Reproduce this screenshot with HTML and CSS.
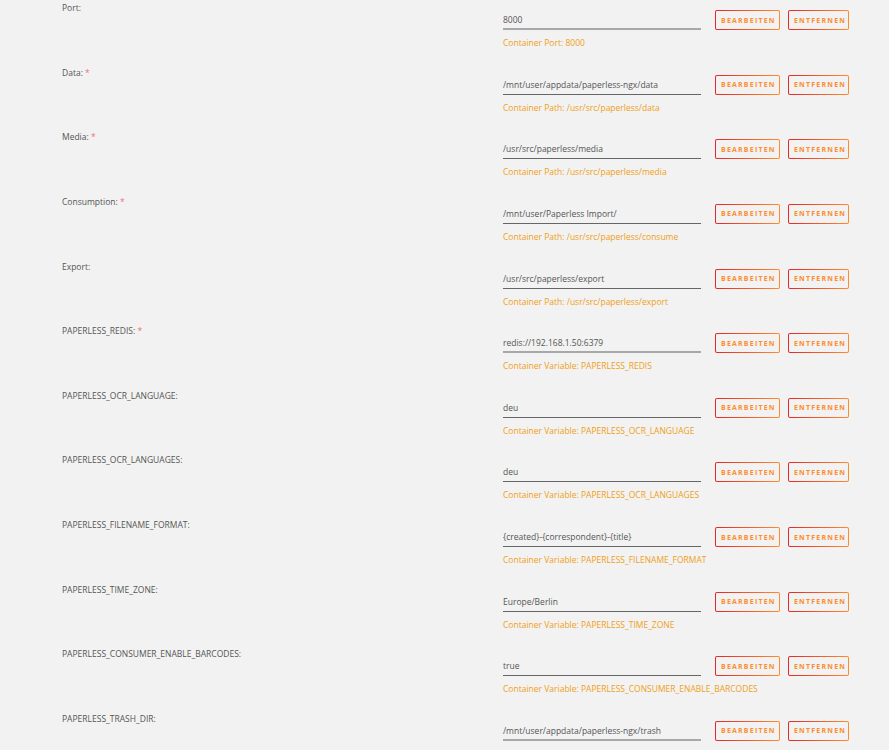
FILE: index.html
```html
<!DOCTYPE html>
<html lang="de">
<head>
<meta charset="utf-8">
<title>Paperless-ngx Konfiguration</title>
<link rel="stylesheet" href="styles.css">
</head>
<body>
<div class="config">
  <div class="row">
    <div class="label">Port:</div>
    <div class="field">
      <div class="input light">8000</div>
      <div class="help">Container Port: 8000</div>
    </div>
    <div class="actions"><button class="btn">Bearbeiten</button><button class="btn">Entfernen</button></div>
  </div>
  <div class="row">
    <div class="label">Data: <span class="req">*</span></div>
    <div class="field">
      <div class="input">/mnt/user/appdata/paperless-ngx/data</div>
      <div class="help">Container Path: /usr/src/paperless/data</div>
    </div>
    <div class="actions"><button class="btn">Bearbeiten</button><button class="btn">Entfernen</button></div>
  </div>
  <div class="row">
    <div class="label">Media: <span class="req">*</span></div>
    <div class="field">
      <div class="input">/usr/src/paperless/media</div>
      <div class="help">Container Path: /usr/src/paperless/media</div>
    </div>
    <div class="actions"><button class="btn">Bearbeiten</button><button class="btn">Entfernen</button></div>
  </div>
  <div class="row">
    <div class="label">Consumption: <span class="req">*</span></div>
    <div class="field">
      <div class="input">/mnt/user/Paperless Import/</div>
      <div class="help">Container Path: /usr/src/paperless/consume</div>
    </div>
    <div class="actions"><button class="btn">Bearbeiten</button><button class="btn">Entfernen</button></div>
  </div>
  <div class="row">
    <div class="label">Export:</div>
    <div class="field">
      <div class="input">/usr/src/paperless/export</div>
      <div class="help">Container Path: /usr/src/paperless/export</div>
    </div>
    <div class="actions"><button class="btn">Bearbeiten</button><button class="btn">Entfernen</button></div>
  </div>
  <div class="row">
    <div class="label">PAPERLESS_REDIS: <span class="req">*</span></div>
    <div class="field">
      <div class="input light">redis://192.168.1.50:6379</div>
      <div class="help">Container Variable: PAPERLESS_REDIS</div>
    </div>
    <div class="actions"><button class="btn">Bearbeiten</button><button class="btn">Entfernen</button></div>
  </div>
  <div class="row">
    <div class="label">PAPERLESS_OCR_LANGUAGE:</div>
    <div class="field">
      <div class="input">deu</div>
      <div class="help">Container Variable: PAPERLESS_OCR_LANGUAGE</div>
    </div>
    <div class="actions"><button class="btn">Bearbeiten</button><button class="btn">Entfernen</button></div>
  </div>
  <div class="row">
    <div class="label">PAPERLESS_OCR_LANGUAGES:</div>
    <div class="field">
      <div class="input">deu</div>
      <div class="help">Container Variable: PAPERLESS_OCR_LANGUAGES</div>
    </div>
    <div class="actions"><button class="btn">Bearbeiten</button><button class="btn">Entfernen</button></div>
  </div>
  <div class="row">
    <div class="label">PAPERLESS_FILENAME_FORMAT:</div>
    <div class="field">
      <div class="input">{created}-{correspondent}-{title}</div>
      <div class="help">Container Variable: PAPERLESS_FILENAME_FORMAT</div>
    </div>
    <div class="actions"><button class="btn">Bearbeiten</button><button class="btn">Entfernen</button></div>
  </div>
  <div class="row">
    <div class="label">PAPERLESS_TIME_ZONE:</div>
    <div class="field">
      <div class="input">Europe/Berlin</div>
      <div class="help">Container Variable: PAPERLESS_TIME_ZONE</div>
    </div>
    <div class="actions"><button class="btn">Bearbeiten</button><button class="btn">Entfernen</button></div>
  </div>
  <div class="row">
    <div class="label">PAPERLESS_CONSUMER_ENABLE_BARCODES:</div>
    <div class="field">
      <div class="input">true</div>
      <div class="help">Container Variable: PAPERLESS_CONSUMER_ENABLE_BARCODES</div>
    </div>
    <div class="actions"><button class="btn">Bearbeiten</button><button class="btn">Entfernen</button></div>
  </div>
  <div class="row">
    <div class="label">PAPERLESS_TRASH_DIR:</div>
    <div class="field">
      <div class="input light">/mnt/user/appdata/paperless-ngx/trash</div>
      <div class="help">Container Variable: PAPERLESS_TRASH_DIR</div>
    </div>
    <div class="actions"><button class="btn">Bearbeiten</button><button class="btn">Entfernen</button></div>
  </div>
</div>
</body>
</html>
```
FILE: styles.css
```css
html, body {
  margin: 0;
  padding: 0;
  background: #f2f2f2;
}

body {
  font-family: "Open Sans", "Noto Sans", sans-serif;
  color: #4f4f4f;
  overflow: hidden;
}

.config {
  display: flex;
  flex-direction: column;
}

.row {
  display: flex;
  align-items: flex-start;
  height: 64.64px;
  flex: none;
  padding-left: 62px;
}

.label {
  width: 441px;
  flex: none;
  font-size: 8.5px;
  line-height: 16px;
  color: #555;
}

.req {
  color: #f07070;
}

.field {
  width: 198px;
  flex: none;
}

.input {
  margin-top: 10px;
  height: 19px;
  line-height: 19px;
  font-size: 8.5px;
  color: #555;
  white-space: nowrap;
  border-bottom: 1px solid #666;
}

.input.light {
  border-bottom: 2px solid #a8a8a8;
  height: 18px;
}

.help {
  margin-top: 5px;
  font-size: 8.5px;
  line-height: 16px;
  white-space: nowrap;
  color: #f0a020;
}

.actions {
  display: flex;
  gap: 8px;
  margin-left: 14px;
  margin-top: 10px;
}

.btn {
  height: 20px;
  padding: 0 4px 0 5px;
  font-family: "Open Sans", "Noto Sans", sans-serif;
  font-weight: 700;
  font-size: 7px;
  letter-spacing: 1.2px;
  text-transform: uppercase;
  color: #ff8c2f;
  border: 1px solid transparent;
  border-radius: 2px;
  background:
    linear-gradient(#f2f2f2, #f2f2f2) padding-box,
    linear-gradient(90deg, #e22828, #ff8c2f) border-box;
  cursor: pointer;
}

.btn:first-child {
  width: 65px;
}

.btn:last-child {
  width: 61px;
}
```
